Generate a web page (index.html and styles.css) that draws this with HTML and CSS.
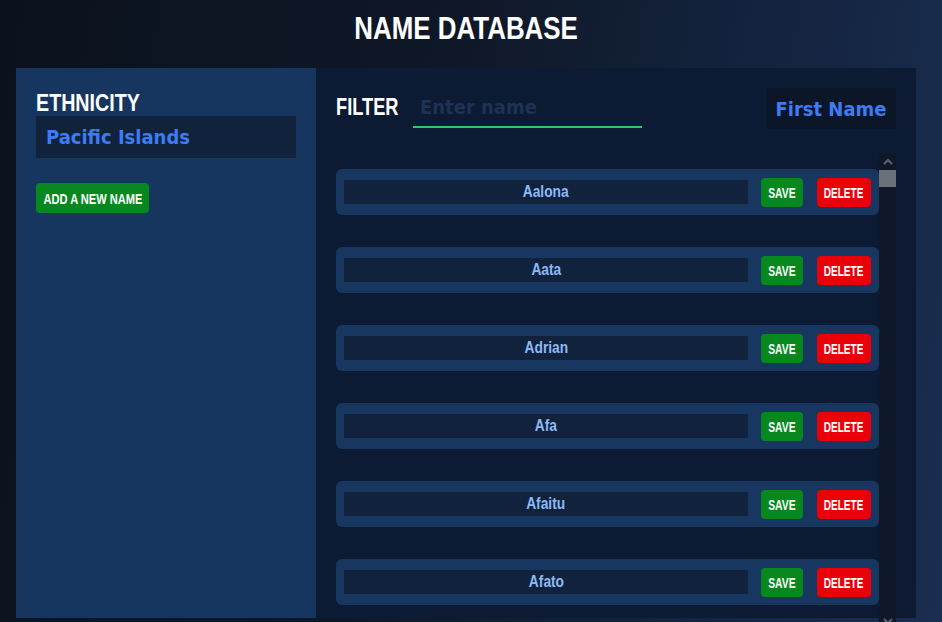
FILE: index.html
```html
<!DOCTYPE html>
<html lang="en">
<head>
<meta charset="utf-8">
<title>Name Database</title>
<link rel="stylesheet" href="styles.css">
</head>
<body>
<header class="top">
  <h1 class="title"><span class="sq">NAME DATABASE</span></h1>
</header>
<main class="app">
  <aside class="side">
    <label class="label side-label"><span class="sq">ETHNICITY</span></label>
    <div class="select">Pacific Islands</div>
    <button class="btn btn-add"><span class="sq">ADD A NEW NAME</span></button>
  </aside>
  <section class="content">
    <div class="toolbar">
      <span class="label filter-label"><span class="sq">FILTER</span></span>
      <input class="filter" type="text" placeholder="Enter name">
      <div class="sort">First Name</div>
    </div>
    <div class="list-wrap">
      <ul class="list">
        <li class="row"><span class="name"><span class="sq">Aalona</span></span><button class="btn btn-save"><span class="sq">SAVE</span></button><button class="btn btn-delete"><span class="sq">DELETE</span></button></li>
        <li class="row"><span class="name"><span class="sq">Aata</span></span><button class="btn btn-save"><span class="sq">SAVE</span></button><button class="btn btn-delete"><span class="sq">DELETE</span></button></li>
        <li class="row"><span class="name"><span class="sq">Adrian</span></span><button class="btn btn-save"><span class="sq">SAVE</span></button><button class="btn btn-delete"><span class="sq">DELETE</span></button></li>
        <li class="row"><span class="name"><span class="sq">Afa</span></span><button class="btn btn-save"><span class="sq">SAVE</span></button><button class="btn btn-delete"><span class="sq">DELETE</span></button></li>
        <li class="row"><span class="name"><span class="sq">Afaitu</span></span><button class="btn btn-save"><span class="sq">SAVE</span></button><button class="btn btn-delete"><span class="sq">DELETE</span></button></li>
        <li class="row"><span class="name"><span class="sq">Afato</span></span><button class="btn btn-save"><span class="sq">SAVE</span></button><button class="btn btn-delete"><span class="sq">DELETE</span></button></li>
      </ul>
      <div class="scrollbar">
        <div class="sb-btn">
          <svg width="10" height="7" viewBox="0 0 10 7"><path d="M1 6 L5 2 L9 6" fill="none" stroke="#5b616c" stroke-width="2.2"/></svg>
        </div>
        <div class="sb-thumb"></div>
        <div class="sb-track"></div>
        <div class="sb-btn">
          <svg width="10" height="7" viewBox="0 0 10 7"><path d="M1 1 L5 5 L9 1" fill="none" stroke="#5b616c" stroke-width="2.2"/></svg>
        </div>
      </div>
    </div>
  </section>
</main>
</body>
</html>
```
FILE: styles.css
```css
* { box-sizing: border-box; }

html, body {
  margin: 0;
  height: 100%;
  overflow: hidden;
}

body {
  background: linear-gradient(100deg, #0b121d 0%, #0f1828 45%, #142440 75%, #1a2e50 100%);
  font-family: "Liberation Sans", Arial, sans-serif;
  color: #ffffff;
}

.sq {
  display: inline-block;
  white-space: nowrap;
  transform-origin: center center;
}

.top {
  height: 68px;
  text-align: center;
  padding-right: 9px;
}

.title {
  margin: 0;
  font-size: 32px;
  line-height: 57px;
  font-weight: bold;
  color: #ffffff;
}

.title .sq { transform: scaleX(0.81); }

.app {
  display: flex;
  width: 900px;
  height: 550px;
  margin: 0 16px;
}

.side {
  width: 300px;
  flex: none;
  background: #16365f;
  padding: 23px 20px 0;
  display: flex;
  flex-direction: column;
  align-items: flex-start;
}

.label {
  font-size: 24px;
  line-height: 24px;
  font-weight: bold;
  color: #ffffff;
}

.label .sq {
  transform-origin: left center;
}

.side-label {
  display: block;
  width: 104px;
}

.side-label .sq { transform: scaleX(0.82); }

.select {
  margin-top: 1px;
  width: 260px;
  height: 42px;
  background: #11223d;
  padding-left: 10px;
  display: flex;
  align-items: center;
  font-family: "DejaVu Sans Condensed", "DejaVu Sans", sans-serif;
  font-stretch: condensed;
  font-weight: bold;
  font-size: 20px;
  color: #3d7cf4;
}

.btn {
  border: none;
  border-radius: 4px;
  color: #ffffff;
  font-family: "Liberation Sans", Arial, sans-serif;
  font-weight: bold;
  padding: 0;
  cursor: pointer;
  display: flex;
  align-items: center;
  justify-content: center;
  overflow: visible;
}

.btn-add {
  margin-top: 25px;
  width: 113px;
  height: 30px;
  background: #07881e;
  font-size: 15px;
}

.btn-add .sq { transform: scaleX(0.74); }

.content {
  flex: 1;
  background: #0c1b33;
  padding: 20px 20px 0;
  display: flex;
  flex-direction: column;
}

.toolbar {
  display: flex;
  align-items: center;
  height: 41px;
  flex: none;
}

.filter-label {
  width: 63px;
  flex: none;
  font-size: 24px;
  margin-top: -4px;
}

.filter-label .sq { transform: scaleX(0.76); }

.filter {
  margin-left: 14px;
  width: 229px;
  height: 40px;
  align-self: flex-start;
  background: transparent;
  border: none;
  border-bottom: 2px solid #32c66c;
  outline: none;
  padding: 0 0 0 7px;
  font-family: "DejaVu Sans Condensed", "DejaVu Sans", sans-serif;
  font-stretch: condensed;
  font-weight: bold;
  font-size: 20px;
  color: #3d7cf4;
}

.filter::placeholder {
  color: #1d3254;
  opacity: 1;
}

.sort {
  margin-left: auto;
  width: 130px;
  height: 41px;
  background: #0b1629;
  display: flex;
  align-items: center;
  justify-content: center;
  font-family: "DejaVu Sans Condensed", "DejaVu Sans", sans-serif;
  font-stretch: condensed;
  font-weight: bold;
  font-size: 20px;
  color: #3d7cf4;
}

.list-wrap {
  margin-top: 24px;
  height: 477px;
  flex: none;
  display: flex;
}

.list {
  list-style: none;
  margin: 0;
  padding: 16px 0 0;
  flex: 1;
  overflow: hidden;
}

.row {
  display: flex;
  align-items: center;
  height: 46px;
  margin-bottom: 32px;
  padding: 0 8px;
  background: #173660;
  border-radius: 6px;
}

.name {
  width: 404px;
  height: 24px;
  background: #11223d;
  display: flex;
  align-items: center;
  justify-content: center;
  font-weight: bold;
  font-size: 16px;
  color: #8cbaf5;
}

.name .sq { transform: scaleX(0.86); }

.btn-save {
  margin-left: 13px;
  width: 42px;
  height: 29px;
  background: #07881e;
  font-size: 15px;
}

.btn-save .sq { transform: scaleX(0.69); }

.btn-delete {
  margin-left: 14px;
  width: 54px;
  height: 29px;
  background: #ea0008;
  font-size: 15px;
}

.btn-delete .sq { transform: scaleX(0.67); }

.scrollbar {
  width: 17px;
  flex: none;
  background: #0f1829;
  display: flex;
  flex-direction: column;
}

.sb-btn {
  height: 17px;
  display: flex;
  align-items: center;
  justify-content: center;
}

.sb-thumb {
  height: 17px;
  background: #6b717b;
}

.sb-track {
  flex: 1;
}
```
